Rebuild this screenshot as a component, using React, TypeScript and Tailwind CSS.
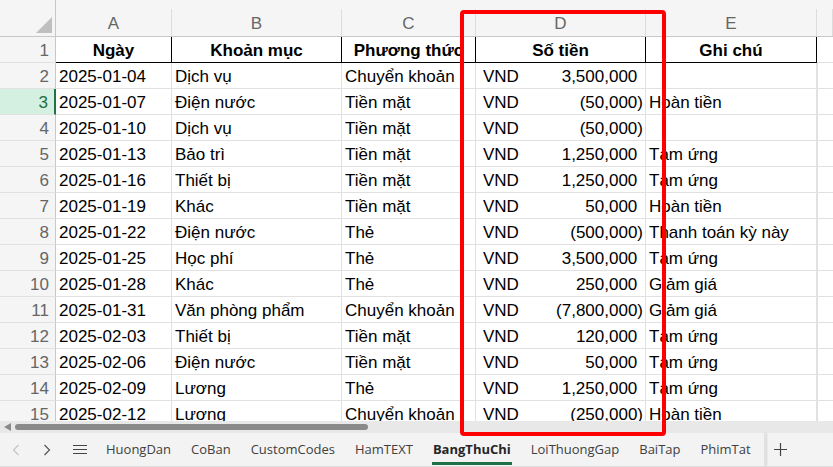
import React from "react";

const COLS = [116, 170, 134, 170, 171];
const LETTERS = ["A", "B", "C", "D", "E"];

type Row = [string, string, string, string, string];

const DATA: Row[] = [
  ["2025-01-04", "Dịch vụ", "Chuyển khoản", "3,500,000", ""],
  ["2025-01-07", "Điện nước", "Tiền mặt", "(50,000)", "Hoàn tiền"],
  ["2025-01-10", "Dịch vụ", "Tiền mặt", "(50,000)", ""],
  ["2025-01-13", "Bảo trì", "Tiền mặt", "1,250,000", "Tạm ứng"],
  ["2025-01-16", "Thiết bị", "Tiền mặt", "1,250,000", "Tạm ứng"],
  ["2025-01-19", "Khác", "Tiền mặt", "50,000", "Hoàn tiền"],
  ["2025-01-22", "Điện nước", "Thẻ", "(500,000)", "Thanh toán kỳ này"],
  ["2025-01-25", "Học phí", "Thẻ", "3,500,000", "Tạm ứng"],
  ["2025-01-28", "Khác", "Thẻ", "250,000", "Giảm giá"],
  ["2025-01-31", "Văn phòng phẩm", "Chuyển khoản", "(7,800,000)", "Giảm giá"],
  ["2025-02-03", "Thiết bị", "Tiền mặt", "120,000", "Tạm ứng"],
  ["2025-02-06", "Điện nước", "Tiền mặt", "50,000", "Tạm ứng"],
  ["2025-02-09", "Lương", "Thẻ", "1,250,000", "Tạm ứng"],
  ["2025-02-12", "Lương", "Chuyển khoản", "(250,000)", "Hoàn tiền"],
];

const HEADERS = ["Ngày", "Khoản mục", "Phương thức", "Số tiền", "Ghi chú"];
const TABS = ["HuongDan", "CoBan", "CustomCodes", "HamTEXT", "BangThuChi", "LoiThuongGap", "BaiTap", "PhimTat"];

const cellFont = { fontFamily: '"Liberation Sans", Arial, sans-serif' };

function RowHeader({ n, selected }: { n: number; selected?: boolean }) {
  return (
    <div
      className={
        "w-[56px] shrink-0 h-full flex items-center justify-end pt-[2px] pr-[6px] text-[17px] border-b border-b-[#e1e1e1] " +
        (selected
          ? "bg-[#d3f0e0] text-[#1e6e41] border-r-2 border-r-[#217346]"
          : "bg-[#f5f5f5] text-[#666666] border-r border-r-[#c8c8c8]")
      }
    >
      {n}
    </div>
  );
}

function Amount({ value }: { value: string }) {
  const neg = value.startsWith("(");
  return (
    <div className="flex justify-between w-full pl-[7px] pr-[2px]">
      <span>VND</span>
      <span>
        {value}
        {!neg && <span className="invisible">)</span>}
      </span>
    </div>
  );
}

export default function App() {
  return (
    <div className="w-[833px] h-[467px] overflow-hidden bg-white relative flex flex-col select-none" style={cellFont}>
      {/* grid */}
      <div className="h-[421px] shrink-0 overflow-hidden">
        {/* column header */}
        <div className="flex h-[37px]">
          <div className="w-[56px] shrink-0 h-full bg-[#f5f5f5] border-r border-r-[#c8c8c8] border-b border-b-[#c8c8c8] flex items-end justify-end pr-[3px] pb-[3px]">
            <svg width="16" height="16" viewBox="0 0 16 16">
              <polygon points="0,16 16,16 16,0" fill="#bfbfbf" />
            </svg>
          </div>
          <div className="flex-1 flex flex-col bg-[#f5f5f5] border-b border-b-[#c8c8c8]">
            <div className="h-[12px]" />
            <div className="flex flex-1">
              {LETTERS.map((l, i) => (
                <div
                  key={l}
                  style={{ width: COLS[i] }}
                  className="shrink-0 border-r border-r-[#dcdcdc] flex items-center justify-center pt-[2px] text-[17px] text-[#666666]"
                >
                  {l}
                </div>
              ))}
              <div className="flex-1 border-r border-r-[#dcdcdc]" />
            </div>
          </div>
        </div>

        {/* row 1 */}
        <div className="flex h-[26px]">
          <RowHeader n={1} />
          {HEADERS.map((h, i) => (
            <div
              key={h}
              style={{ width: COLS[i] }}
              className="shrink-0 h-full border-r border-r-black border-b border-b-black flex items-center justify-center pt-[2px] px-[3px] overflow-hidden whitespace-nowrap font-bold text-[17px] text-black"
            >
              {h}
            </div>
          ))}
          <div className="flex-1 h-full border-b border-b-[#e1e1e1]" />
        </div>

        {/* data rows */}
        {DATA.map((r, ri) => (
          <div key={ri} className="flex h-[26px]">
            <RowHeader n={ri + 2} selected={ri === 1} />
            {r.map((v, ci) => (
              <div
                key={ci}
                style={{ width: COLS[ci] }}
                className={
                  "shrink-0 h-full border-r border-r-[#e1e1e1] border-b border-b-[#e1e1e1] flex items-center pt-[2px] whitespace-nowrap text-[17px] text-black " +
                  (ci === 4 ? "overflow-visible pl-[3px] relative z-[1]" : ci === 3 ? "" : "overflow-hidden pl-[3px]")
                }
              >
                {ci === 3 ? <Amount value={v} /> : v}
              </div>
            ))}
            <div className="flex-1 h-full border-b border-b-[#e1e1e1] border-l border-l-[#e1e1e1]" />
          </div>
        ))}
      </div>

      {/* horizontal scrollbar */}
      <div className="h-[12px] shrink-0 bg-[#e8e8e8] flex items-center">
        <svg width="15" height="12" viewBox="0 0 15 12" className="shrink-0">
          <polygon points="4,6 11,2 11,10" fill="#8a8a8a" />
        </svg>
        <div className="w-[353px] h-[6px] rounded-full bg-[#8a8a8a]" />
      </div>

      {/* sheet tabs */}
      <div
        className="flex-1 bg-[#f3f3f3] border-b border-b-[#dedede] flex items-stretch text-[13px] text-[#404040]"
        style={{ fontFamily: '"Open Sans", "Noto Sans", sans-serif' }}
      >
        <div className="w-[30px] flex items-center justify-center pl-[2px]">
          <svg width="8" height="12" viewBox="0 0 8 12">
            <polyline points="6.5,1 1.5,6 6.5,11" fill="none" stroke="#c4c4c4" strokeWidth="1.2" />
          </svg>
        </div>
        <div className="w-[33px] flex items-center justify-center">
          <svg width="8" height="12" viewBox="0 0 8 12">
            <polyline points="1.5,1 6.5,6 1.5,11" fill="none" stroke="#555" strokeWidth="1.2" />
          </svg>
        </div>
        <div className="w-[33px] flex items-center justify-center">
          <svg width="14" height="11" viewBox="0 0 14 11">
            <path d="M0 1.5h14M0 5.5h14M0 9.5h14" stroke="#444" strokeWidth="1.2" />
          </svg>
        </div>
        <div className="flex items-stretch">
          {TABS.map((t) => {
            const active = t === "BangThuChi";
            return (
              <div key={t} className="relative flex items-center px-[10px]">
                <span className={active ? "font-bold text-[#262626]" : ""}>{t}</span>
                {active && <div className="absolute left-[9px] right-[9px] bottom-[1px] h-[3px] bg-[#1e7145]" />}
              </div>
            );
          })}
        </div>
        <div className="ml-[3px] w-[2px] bg-[#e2e2e2] shadow-[1px_0_2px_rgba(0,0,0,0.12)]" />
        <div className="w-[30px] flex items-center justify-center">
          <svg width="13" height="13" viewBox="0 0 13 13">
            <path d="M6.5 0v13M0 6.5h13" stroke="#444" strokeWidth="1.2" />
          </svg>
        </div>
      </div>

      {/* red highlight box */}
      <div className="absolute left-[460px] top-[10px] w-[206px] h-[426px] border-[4px] border-[#ff0000] rounded-[4px] pointer-events-none z-10" />
    </div>
  );
}
